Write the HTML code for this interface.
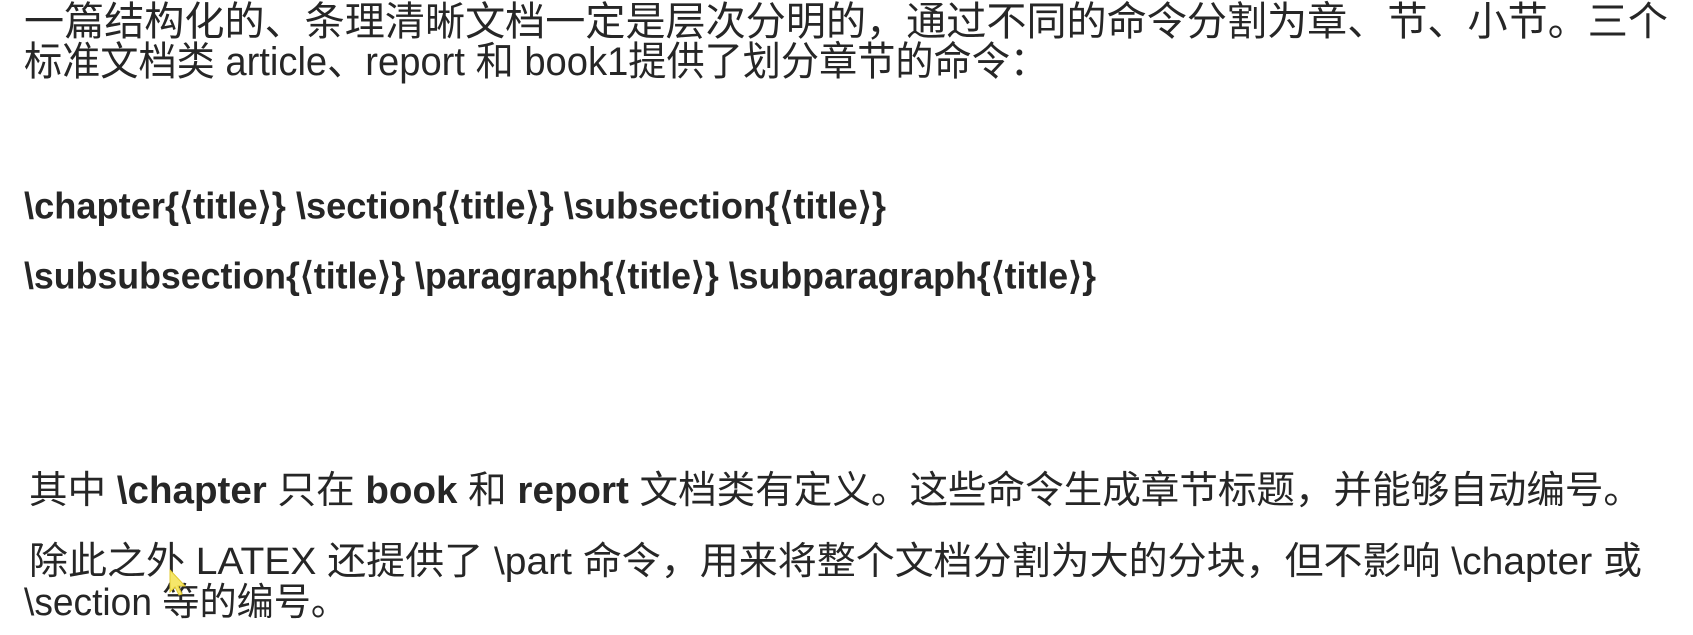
<!DOCTYPE html>
<html><head><meta charset="utf-8"><style>
html,body{margin:0;padding:0;background:#fff;width:1693px;height:635px;overflow:hidden}
svg{display:block}
text{font-family:"Liberation Sans","Noto Sans CJK SC",sans-serif;fill:#262626;dominant-baseline:central}
.b{font-weight:bold}
</style></head><body>
<svg width="1693" height="635" viewBox="0 0 1693 635" xmlns="http://www.w3.org/2000/svg">
<text x="24" y="22" font-size="40" textLength="1644" lengthAdjust="spacingAndGlyphs">一篇结构化的、条理清晰文档一定是层次分明的，通过不同的命令分割为章、节、小节。三个</text>
<text x="24" y="62" font-size="40" textLength="1024" lengthAdjust="spacingAndGlyphs">标准文档类 article、report 和 book1提供了划分章节的命令：</text>
<text class="b" x="24" y="206" font-size="37" textLength="862" lengthAdjust="spacingAndGlyphs">\chapter{⟨title⟩} \section{⟨title⟩} \subsection{⟨title⟩}</text>
<text class="b" x="24" y="276" font-size="37" textLength="1072" lengthAdjust="spacingAndGlyphs">\subsubsection{⟨title⟩} \paragraph{⟨title⟩} \subparagraph{⟨title⟩}</text>
<text x="29" y="491" font-size="38" textLength="1613" lengthAdjust="spacingAndGlyphs">其中 <tspan class="b">\chapter</tspan> 只在 <tspan class="b">book</tspan> 和 <tspan class="b">report</tspan> 文档类有定义。这些命令生成章节标题，并能够自动编号。</text>
<text x="29" y="562" font-size="38" textLength="1613" lengthAdjust="spacingAndGlyphs">除此之外 LATEX 还提供了 \part 命令，用来将整个文档分割为大的分块，但不影响 \chapter 或</text>
<text x="24" y="603" font-size="38" textLength="324" lengthAdjust="spacingAndGlyphs">\section 等的编号。</text>
<polygon points="170,570 170,592 175,587 179,595 182,594 178,586 185,586" fill="#f5e66a" stroke="#e0c830" stroke-width="1"/>
</svg>
</body></html>
